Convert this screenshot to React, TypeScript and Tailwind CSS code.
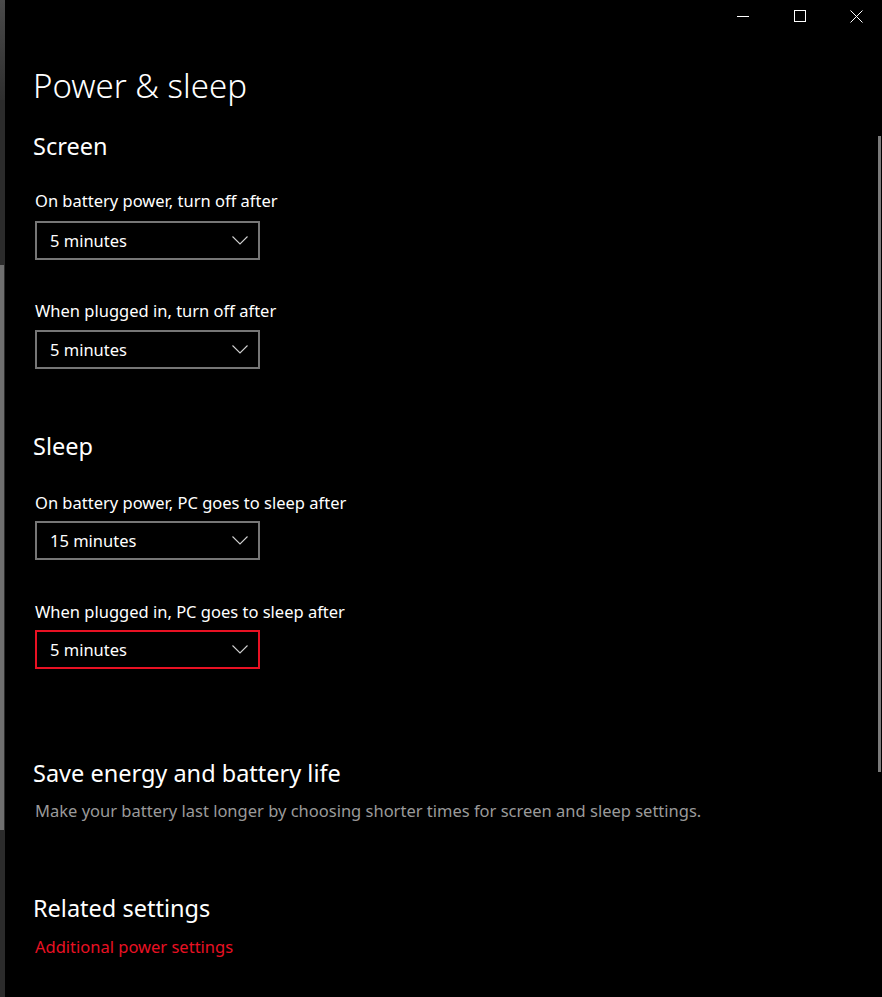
const font = { fontFamily: '"Noto Sans", "Open Sans", sans-serif' };

function Chevron() {
  return (
    <svg width="16" height="9" viewBox="0 0 16 9" className="text-[#d0d0d0]">
      <path d="M0.5 0.5 L8 8 L15.5 0.5" fill="none" stroke="currentColor" strokeWidth="1.1" />
    </svg>
  );
}

function Dropdown({ value, active = false }: { value: string; active?: boolean }) {
  return (
    <div
      className={`flex h-[39px] w-[225px] items-center justify-between border-2 pl-[13px] pr-[10px] ${
        active ? 'border-[#e81123]' : 'border-[#767676]'
      }`}
    >
      <span className="text-[16.5px] leading-[21px] text-white">{value}</span>
      <Chevron />
    </div>
  );
}

function WindowControls() {
  return (
    <div className="mr-[-3px] flex h-8 justify-end">
      <button className="flex w-[57px] items-center justify-center">
        <span className="block h-px w-[12px] bg-white" />
      </button>
      <button className="flex w-[57px] items-center justify-center">
        <span className="block h-[12px] w-[12px] border border-white" />
      </button>
      <button className="flex w-[57px] items-center justify-center">
        <svg width="13" height="13" viewBox="0 0 13 13">
          <path d="M0.5 0.5 L12.5 12.5 M12.5 0.5 L0.5 12.5" stroke="white" strokeWidth="1" />
        </svg>
      </button>
    </div>
  );
}

export default function App() {
  return (
    <div className="flex h-[997px] w-[882px] overflow-hidden bg-black text-white" style={font}>
      {/* left pane edge */}
      <div className="flex w-[5px] flex-col bg-[#2b2b2b]">
        <div className="h-[100px] bg-gradient-to-b from-[#4a4a4a] to-[#2f2f2f]" />
        <div className="mt-[165px] h-[565px] w-[4px] bg-[#6f6f6f]" />
      </div>

      <div className="relative flex-1 overflow-hidden">
        <WindowControls />

        <div className="pl-[28px]">
          <h1 className="mt-[34px] text-[33px] font-light leading-[40px]">Power &amp; sleep</h1>

          <h2 className="mt-[24px] text-[23.5px] leading-[32px]">Screen</h2>
          <p className="mt-[28px] pl-[2px] text-[16.5px] leading-[21px]">On battery power, turn off after</p>
          <div className="mt-[10px] pl-[2px]">
            <Dropdown value="5 minutes" />
          </div>
          <p className="mt-[40px] pl-[2px] text-[16.5px] leading-[21px]">When plugged in, turn off after</p>
          <div className="mt-[9px] pl-[2px]">
            <Dropdown value="5 minutes" />
          </div>

          <h2 className="mt-[61px] text-[23.5px] leading-[32px]">Sleep</h2>
          <p className="mt-[30px] pl-[2px] text-[16.5px] leading-[21px]">On battery power, PC goes to sleep after</p>
          <div className="mt-[8px] pl-[2px]">
            <Dropdown value="15 minutes" />
          </div>
          <p className="mt-[41px] pl-[2px] text-[16.5px] leading-[21px]">When plugged in, PC goes to sleep after</p>
          <div className="mt-[8px] pl-[2px]">
            <Dropdown value="5 minutes" active />
          </div>

          <h2 className="mt-[88px] text-[23.5px] leading-[32px]">Save energy and battery life</h2>
          <p className="mt-[11px] pl-[2px] text-[16.5px] leading-[21px] text-[#9a9a9a]">
            Make your battery last longer by choosing shorter times for screen and sleep settings.
          </p>

          <h2 className="mt-[71px] text-[23.5px] leading-[32px]">Related settings</h2>
          <a href="#" className="mt-[12px] block pl-[2px] text-[16.5px] leading-[21px] text-[#e81123]">
            Additional power settings
          </a>
        </div>

        {/* scrollbar thumb */}
        <div className="absolute right-[1px] top-[136px] h-[636px] w-[3px] bg-[#7a7a7a]" />
      </div>
    </div>
  );
}
